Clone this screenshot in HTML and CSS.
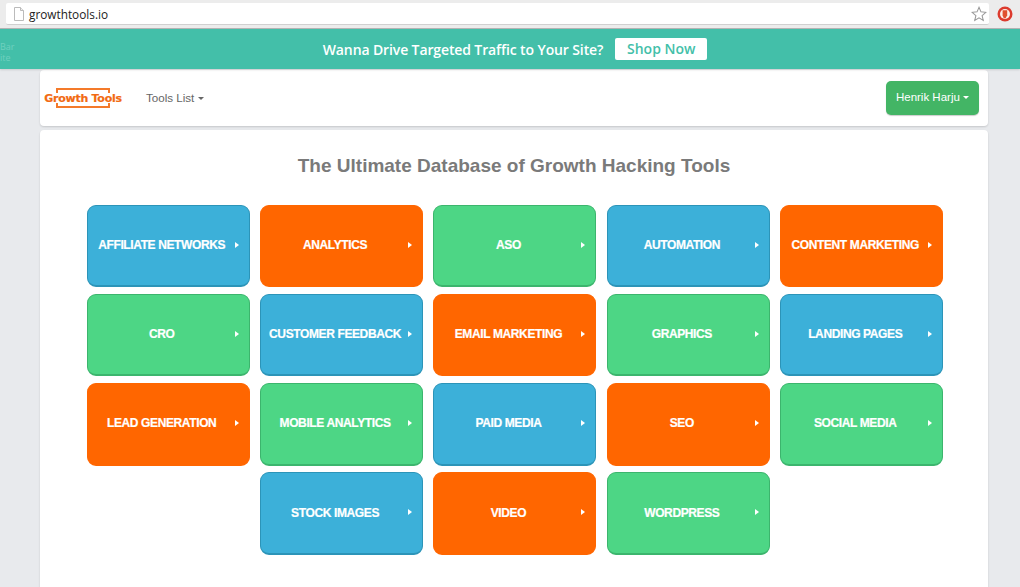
FILE: index.html
```html
<!DOCTYPE html>
<html lang="en">
<head>
    <meta charset="UTF-8">
    <meta name="viewport" content="width=device-width, initial-scale=1.0">
    <title>Growth Tools</title>
    <link rel="stylesheet" href="styles.css">
</head>
<body>
    <div class="browser-bar">
        <div class="url-box">
            <svg class="page-icon" width="12" height="14" viewBox="0 0 12 14">
                <path d="M1.5 .5H7.5L10.5 3.5V13.5H1.5Z" fill="#fff" stroke="#bbb"/>
                <path d="M7.5 .5V3.5H10.5" fill="#eee" stroke="#bbb"/>
            </svg>
            <span class="url-text">growthtools.io</span>
            <svg class="star-icon" width="16" height="16" viewBox="0 0 18 18">
                <path d="M9 1.5L11.2 6.6L16.7 7.1L12.5 10.8L13.8 16.2L9 13.3L4.2 16.2L5.5 10.8L1.3 7.1L6.8 6.6Z" fill="#fff" stroke="#999" stroke-width="1.2"/>
            </svg>
        </div>
        <svg class="ext-icon" width="16" height="16" viewBox="0 0 16 16">
            <circle cx="8" cy="8" r="7.5" fill="#dc3b2e"/>
            <circle cx="8" cy="8" r="5" fill="#fbeee9"/>
            <path d="M5.6 4.2H10.2V9.2L8.6 12.2H6.8L5.6 9.4Z" fill="#e0502f"/>
        </svg>
    </div>

    <div class="promo">
        <div class="promo-ghost">Bar<br>ite</div>
        <span class="promo-text">Wanna Drive Targeted Traffic to Your Site?</span>
        <a class="promo-btn">Shop Now</a>
    </div>

    <div class="page">
        <nav class="navbar">
            <div class="logo"><span class="logo-text">Growth Tools</span></div>
            <a class="nav-link">Tools List <span class="caret"></span></a>
            <a class="user-btn">Henrik Harju <span class="caret"></span></a>
        </nav>

        <div class="main-card">
            <h1>The Ultimate Database of Growth Hacking Tools</h1>
            <div class="tool-list">
                <a class="tool blue">AFFILIATE NETWORKS</a>
                <a class="tool orange">ANALYTICS</a>
                <a class="tool green">ASO</a>
                <a class="tool blue">AUTOMATION</a>
                <a class="tool orange">CONTENT MARKETING</a>
                <a class="tool green">CRO</a>
                <a class="tool blue">CUSTOMER FEEDBACK</a>
                <a class="tool orange">EMAIL MARKETING</a>
                <a class="tool green">GRAPHICS</a>
                <a class="tool blue">LANDING PAGES</a>
                <a class="tool orange">LEAD GENERATION</a>
                <a class="tool green">MOBILE ANALYTICS</a>
                <a class="tool blue">PAID MEDIA</a>
                <a class="tool orange">SEO</a>
                <a class="tool green">SOCIAL MEDIA</a>
                <a class="tool blue">STOCK IMAGES</a>
                <a class="tool orange">VIDEO</a>
                <a class="tool green">WORDPRESS</a>
            </div>
        </div>
    </div>
</body>
</html>
```

FILE: styles.css
```css
body {
    margin: 0;
    height: 587px;
    overflow: hidden;
    font-family: "Liberation Sans", Arial, sans-serif;
    background-color: #e8eaed;
}

/* browser chrome */
.browser-bar {
    height: 29px;
    box-sizing: border-box;
    padding: 3px 7px 3px 6px;
    display: flex;
    align-items: center;
    gap: 8px;
    background-color: #ececec;
    border-bottom: 1px solid #b5b5b5;
}
.url-box {
    flex: 1;
    height: 22px;
    box-sizing: border-box;
    padding: 0 0 0 7px;
    display: flex;
    align-items: center;
    background-color: #fff;
    border-bottom: 1px solid #d0d0d0;
    border-radius: 2px;
}
.page-icon {
    margin-right: 4px;
}
.url-text {
    flex: 1;
    font-family: "Open Sans", sans-serif;
    font-size: 11.8px;
    color: #222;
}
.star-icon {
    margin-right: 2px;
}

/* promo bar */
.promo {
    position: relative;
    height: 40px;
    padding-left: 10px;
    display: flex;
    align-items: center;
    justify-content: center;
    gap: 12px;
    background-color: #43bfa9;
    box-shadow: 0 1px 2px rgba(0, 0, 0, 0.12);
    font-family: "Open Sans", sans-serif;
}
.promo-ghost {
    position: absolute;
    left: 0;
    top: 12px;
    font-size: 9px;
    line-height: 11px;
    color: #6fd0bf;
}
.promo-text {
    font-size: 14px;
    font-weight: 600;
    letter-spacing: -0.12px;
    color: #fff;
}
.promo-btn {
    width: 92px;
    height: 22px;
    line-height: 22px;
    text-align: center;
    border-radius: 2px;
    background-color: #fff;
    color: #43bfa9;
    font-size: 14px;
    font-weight: 600;
}

/* page */
.page {
    width: 948px;
    margin-left: 40px;
    padding-top: 1px;
}
.navbar {
    height: 56px;
    display: flex;
    align-items: center;
    background-color: #fff;
    border-radius: 4px;
    box-shadow: 0 1px 2px rgba(0, 0, 0, 0.15);
}
.logo {
    position: relative;
    width: 78px;
    height: 20px;
    margin: 0 24px 0 4px;
    display: flex;
    align-items: center;
    justify-content: center;
}
.logo::before,
.logo::after {
    content: "";
    position: absolute;
    left: 12px;
    right: 12px;
    height: 3px;
    border: 2px solid #f47a2a;
}
.logo::before {
    top: 0;
    border-bottom: 0;
}
.logo::after {
    bottom: 0;
    border-top: 0;
}
.logo-text {
    font-family: "DejaVu Sans", sans-serif;
    font-size: 11px;
    font-weight: bold;
    letter-spacing: -0.25px;
    -webkit-text-stroke: 0.2px #f26a12;
    color: #f26a12;
    white-space: nowrap;
}
.nav-link {
    padding-bottom: 1px;
    font-size: 11.6px;
    color: #666;
}
.caret {
    display: inline-block;
    vertical-align: middle;
    border-top: 3px solid;
    border-left: 3px solid transparent;
    border-right: 3px solid transparent;
}
.user-btn {
    margin-left: auto;
    margin-right: 9px;
    width: 93px;
    height: 34px;
    line-height: 33px;
    text-align: center;
    border-radius: 5px;
    background-color: #43b565;
    box-shadow: 0 1px 1px rgba(0, 0, 0, 0.2);
    color: #fff;
    font-size: 11.5px;
}
.main-card {
    margin-top: 4px;
    height: 470px;
    background-color: #fff;
    border-radius: 4px;
    box-shadow: 0 1px 2px rgba(0, 0, 0, 0.15);
}
h1 {
    margin: 0;
    padding-top: 24px;
    text-align: center;
    font-size: 19px;
    line-height: 24px;
    color: #7a7a7a;
}
.tool-list {
    margin-top: 26.7px;
    padding: 0 44.7px 0 46.6px;
    display: flex;
    flex-wrap: wrap;
    justify-content: center;
    gap: 6.7px 10.4px;
}
.tool {
    position: relative;
    width: 163px;
    height: 82.5px;
    box-sizing: border-box;
    padding: 0 24px 1px 11px;
    display: flex;
    align-items: center;
    justify-content: center;
    border-radius: 9px;
    border: 1px solid;
    border-bottom-width: 2px;
    color: #fff;
    font-size: 12px;
    letter-spacing: -0.38px;
    -webkit-text-stroke: 0.2px #fff;
    font-weight: bold;
    white-space: nowrap;
}
.tool::after {
    content: "";
    position: absolute;
    right: 10px;
    top: 36px;
    border-left: 4px solid #fff;
    border-top: 3.5px solid transparent;
    border-bottom: 3.5px solid transparent;
}
.blue {
    background-color: #3cb0d9;
    border-color: #2c94b8;
}
.orange {
    background-color: #ff6600;
    border-color: #ff6600;
}
.green {
    background-color: #4dd685;
    border-color: #3cb56d;
}
```
